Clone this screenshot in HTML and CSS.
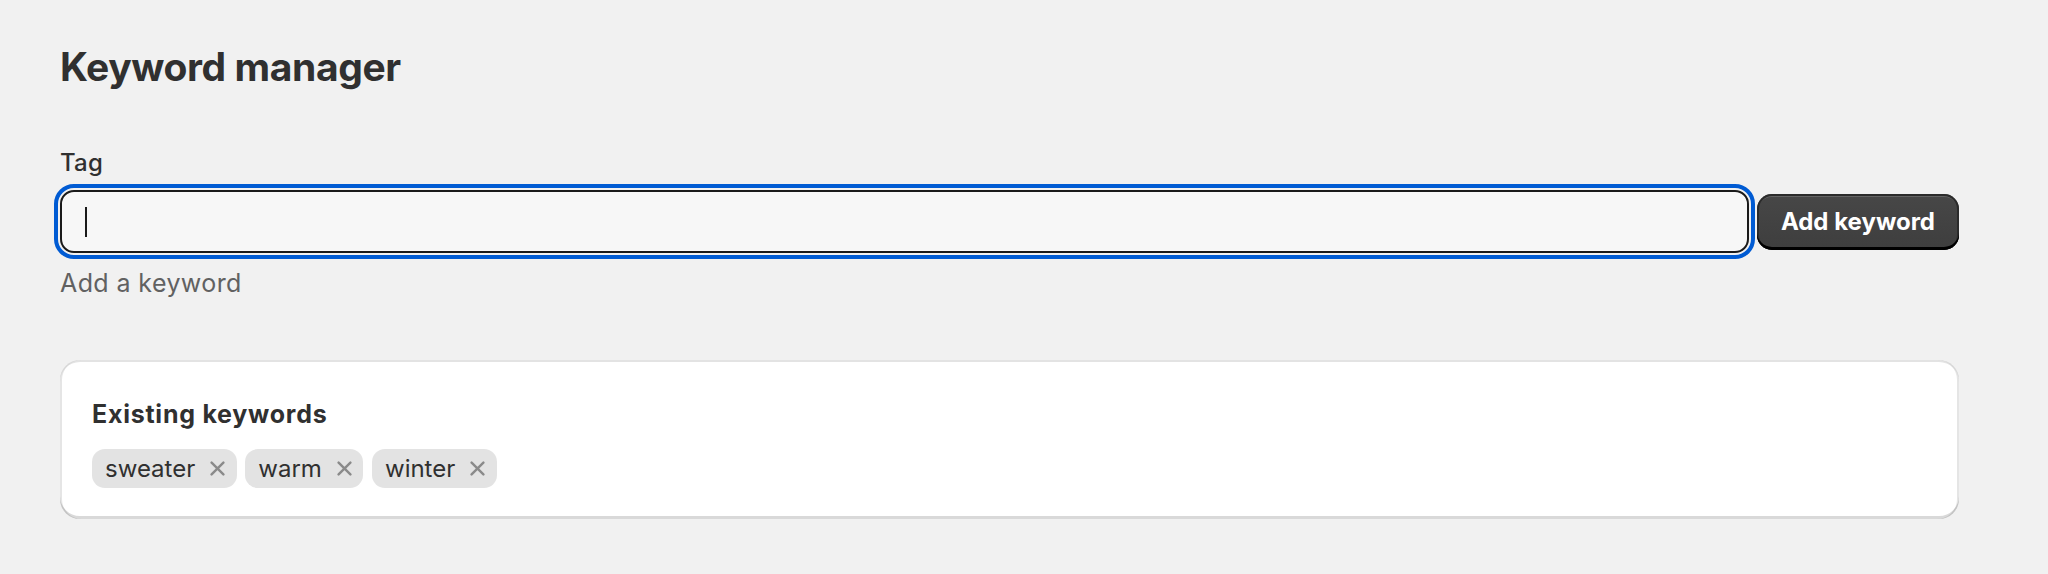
FILE: index.html
```html
<!DOCTYPE html>
<html lang="en">
<head>
<meta charset="utf-8">
<title>Keyword manager</title>
<link rel="stylesheet" href="styles.css">
</head>
<body>
<main class="page">
  <h1 class="page-title">Keyword manager</h1>

  <div class="field">
    <label class="field-label" for="tag-input">Tag</label>
    <div class="field-row">
      <div class="text-input" id="tag-input" role="textbox" aria-label="Tag"><span class="caret"></span></div>
      <button class="btn-primary" type="button">Add keyword</button>
    </div>
    <p class="field-help">Add a keyword</p>
  </div>

  <section class="card">
    <h2 class="card-title">Existing keywords</h2>
    <ul class="tag-list">
      <li class="tag"><span class="tag-text">sweater</span><button class="tag-remove" type="button" aria-label="Remove sweater"><svg viewBox="0 0 15 15" width="15" height="15"><path d="M1.6 1.6L13.4 13.4M13.4 1.6L1.6 13.4"/></svg></button></li>
      <li class="tag"><span class="tag-text">warm</span><button class="tag-remove" type="button" aria-label="Remove warm"><svg viewBox="0 0 15 15" width="15" height="15"><path d="M1.6 1.6L13.4 13.4M13.4 1.6L1.6 13.4"/></svg></button></li>
      <li class="tag"><span class="tag-text">winter</span><button class="tag-remove" type="button" aria-label="Remove winter"><svg viewBox="0 0 15 15" width="15" height="15"><path d="M1.6 1.6L13.4 13.4M13.4 1.6L1.6 13.4"/></svg></button></li>
    </ul>
  </section>
</main>
</body>
</html>
```

FILE: styles.css
```css
* {
  box-sizing: border-box;
}

html, body {
  margin: 0;
  padding: 0;
  background: #f1f1f1;
}

body {
  font-family: Inter, "Noto Sans", "Liberation Sans", sans-serif;
  color: #303030;
}

.page {
  width: 1899px;
  margin-left: 60px;
  padding-top: 42.5px;
}

.page-title {
  margin: 0;
  font-size: 39px;
  line-height: 48px;
  font-weight: 700;
  letter-spacing: -0.4px;
  color: #303030;
}

.field {
  margin-top: 56.5px;
}

.field-label {
  display: block;
  font-size: 24px;
  line-height: 32px;
  font-weight: 450;
  letter-spacing: 0.2px;
  color: #303030;
}

.field-row {
  margin-top: 11px;
  display: flex;
  align-items: center;
  gap: 8px;
}

.text-input {
  flex: 1;
  height: 63px;
  display: flex;
  align-items: center;
  padding-left: 23px;
  background: #f7f7f7;
  border: 2px solid #1a1a1a;
  border-radius: 14px;
  outline: 4px solid #005bd3;
  outline-offset: 2px;
}

.caret {
  display: block;
  width: 2px;
  height: 30px;
  background: #1a1a1a;
}

.btn-primary {
  height: 56px;
  padding: 0 24px;
  border: none;
  border-radius: 15px;
  background: linear-gradient(#474747, #3e3e3e);
  color: #ffffff;
  font-family: inherit;
  font-size: 24px;
  font-weight: 650;
  line-height: 32px;
  box-shadow:
    inset 0 -3px 0 #000000,
    inset 0 0 0 2px #2b2b2b,
    inset 0 4px 0 -1px rgba(255, 255, 255, 0.16);
  cursor: pointer;
}

.field-help {
  margin: 13.8px 0 0;
  font-size: 25px;
  line-height: 32px;
  letter-spacing: 0.4px;
  color: #616161;
}

.card {
  margin-top: 61.2px;
  background: #ffffff;
  border-radius: 20px;
  padding: 38px 32px 31px;
  box-shadow:
    inset 0 2px 0 rgba(204, 204, 204, 0.55),
    inset 0 -3px 0 rgba(0, 0, 0, 0.15),
    inset 2px 0 0 rgba(0, 0, 0, 0.1),
    inset -2px 0 0 rgba(0, 0, 0, 0.1);
}

.card-title {
  margin: 0;
  font-size: 25px;
  line-height: 32px;
  font-weight: 700;
  letter-spacing: 0.75px;
  color: #303030;
}

.tag-list {
  list-style: none;
  margin: 19.3px 0 0;
  padding: 0;
  display: flex;
  gap: 8.6px;
}

.tag {
  display: flex;
  align-items: center;
  height: 39px;
  padding-left: 13px;
  background: #e3e3e3;
  border-radius: 13px;
}

.tag-text {
  font-size: 24px;
  line-height: 32px;
  color: #303030;
}

.tag-remove {
  width: 38px;
  height: 39px;
  margin-left: 3.5px;
  padding: 0;
  border: none;
  background: transparent;
  display: flex;
  align-items: center;
  justify-content: center;
  cursor: pointer;
}

.tag-remove svg {
  display: block;
  fill: none;
  stroke: #8a8a8a;
  stroke-width: 2.4;
  stroke-linecap: round;
}
```
